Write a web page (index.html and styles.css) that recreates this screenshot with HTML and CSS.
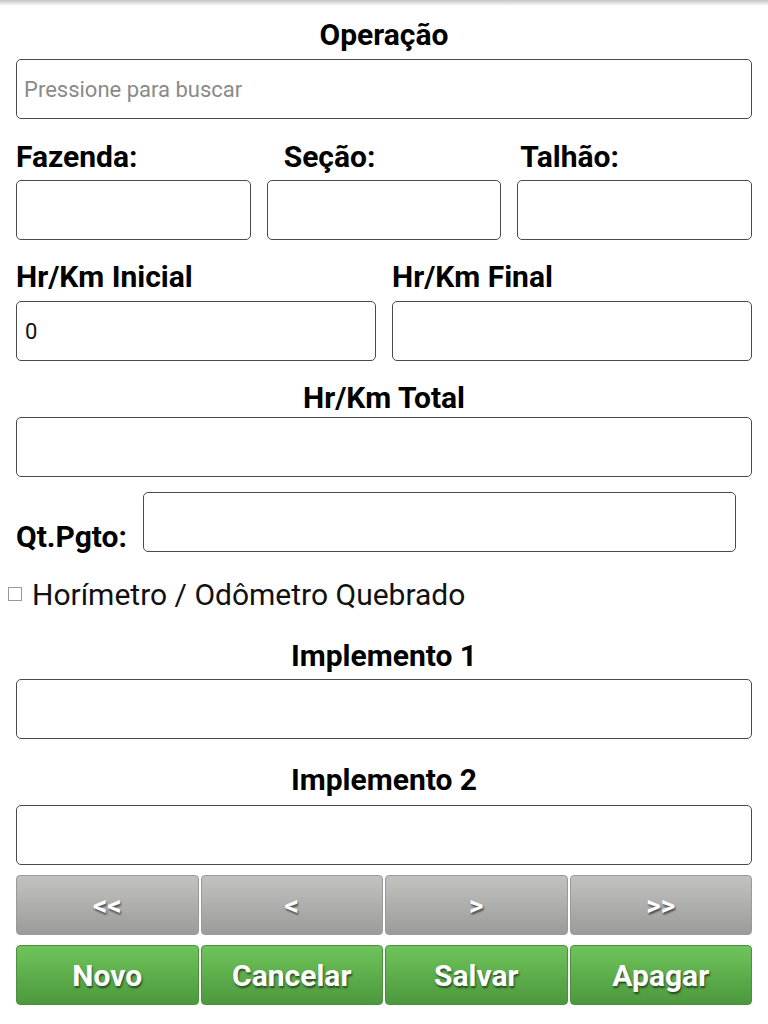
FILE: index.html
```html
<!DOCTYPE html>
<html lang="pt-BR">
<head>
<meta charset="utf-8">
<title>Operação</title>
<link rel="stylesheet" href="styles.css">
</head>
<body>
<div class="topshadow"></div>
<form class="page">
  <div class="label center title">Operação</div>
  <div class="field search"><span class="placeholder">Pressione para buscar</span></div>

  <div class="grid3 labels-row r1">
    <div class="label">Fazenda:</div>
    <div class="label l-secao">Seção:</div>
    <div class="label l-talhao">Talhão:</div>
  </div>
  <div class="grid3">
    <div class="field"></div>
    <div class="field"></div>
    <div class="field"></div>
  </div>

  <div class="grid2 labels-row r2">
    <div class="label">Hr/Km Inicial</div>
    <div class="label">Hr/Km Final</div>
  </div>
  <div class="grid2">
    <div class="field"><span class="value">0</span></div>
    <div class="field"></div>
  </div>

  <div class="label center r3">Hr/Km Total</div>
  <div class="field"></div>

  <div class="qt-row">
    <div class="label qt-label">Qt.Pgto:</div>
    <div class="field qt-field"></div>
  </div>

  <label class="check-row">
    <span class="checkbox"></span>
    <span class="check-text">Horímetro / Odômetro Quebrado</span>
  </label>

  <div class="label center r4">Implemento 1</div>
  <div class="field"></div>

  <div class="label center r5">Implemento 2</div>
  <div class="field"></div>

  <div class="btn-row nav">
    <button type="button" class="btn gray">&lt;&lt;</button>
    <button type="button" class="btn gray">&lt;</button>
    <button type="button" class="btn gray">&gt;</button>
    <button type="button" class="btn gray">&gt;&gt;</button>
  </div>
  <div class="btn-row actions">
    <button type="button" class="btn green">Novo</button>
    <button type="button" class="btn green">Cancelar</button>
    <button type="button" class="btn green">Salvar</button>
    <button type="button" class="btn green">Apagar</button>
  </div>
</form>
</body>
</html>
```

FILE: styles.css
```css
html, body {
  margin: 0;
  padding: 0;
  background: #ffffff;
}
body {
  font-family: Roboto, "Liberation Sans", Arial, sans-serif;
  color: #000;
  width: 768px;
  height: 1024px;
  overflow: hidden;
  position: relative;
}
.topshadow {
  position: absolute;
  left: 0;
  top: 0;
  width: 768px;
  height: 6px;
  background: linear-gradient(#c4c4c4, rgba(255,255,255,0));
}
.page {
  padding: 20px 16px 0 16px;
  display: flex;
  flex-direction: column;
}
.label {
  font-size: 30px;
  font-weight: 700;
  line-height: 30px;
  height: 30px;
  white-space: nowrap;
}
.center { text-align: center; }
.title { margin-bottom: 9px; }
.field {
  height: 58px;
  border: 1px solid #4a4a4a;
  border-radius: 5px;
  background: #fff;
  display: flex;
  align-items: center;
  padding: 0 7px;
  box-sizing: content-box;
}
.grid3 .field, .grid2 .field { padding: 0; }
.placeholder {
  font-size: 22px;
  color: #8a8a8a;
}
.value {
  font-size: 22px;
  color: #111;
  padding-left: 8px;
}
.grid3 {
  display: grid;
  grid-template-columns: 1fr 1fr 1fr;
  column-gap: 16px;
}
.grid2 {
  display: grid;
  grid-template-columns: 1fr 1fr;
  column-gap: 16px;
}
.labels-row { margin-bottom: 8px; }
.r1 { margin-top: 23px; }
.l-secao { padding-left: 17px; }
.l-talhao { padding-left: 3px; }
.r2 { margin-top: 22px; margin-bottom: 9px; }
.r3 { margin-top: 22px; margin-bottom: 4px; }
.qt-row {
  display: flex;
  align-items: flex-end;
  margin-top: 15px;
  margin-right: 16px;
  gap: 10px;
}
.qt-label { flex: none; width: 117px; margin-bottom: 0; }
.qt-field { flex: 1; }
.check-row {
  display: flex;
  align-items: center;
  margin-left: -8px;
  margin-top: 27px;
  height: 30px;
}
.checkbox {
  width: 12px;
  height: 12px;
  border: 1px solid #999;
  background: #fff;
  margin-right: 10px;
  flex: none;
}
.check-text {
  font-size: 30px;
  font-weight: 400;
  color: #111;
  white-space: nowrap;
}
.r4 { margin-top: 32px; margin-bottom: 8px; }
.r5 { margin-top: 26px; margin-bottom: 10px; }
.btn-row {
  display: grid;
  grid-template-columns: repeat(4, 1fr);
  column-gap: 2px;
  margin-top: 10px;
}
.btn {
  height: 60px;
  border-radius: 4px;
  font-family: Roboto, "Liberation Sans", Arial, sans-serif;
  font-weight: 700;
  color: #fff;
  text-shadow: 1px 2px 2px rgba(0,0,0,0.55);
  padding: 0;
  margin: 0;
  cursor: pointer;
}
.gray {
  font-size: 28px;
  border: 1px solid #9a9a98;
  background: linear-gradient(#c2c2be, #9b9b9b);
}
.green {
  font-size: 30px;
  border: 1px solid #4c8f3d;
  background: linear-gradient(#6fc45b, #4d983e);
}
```
